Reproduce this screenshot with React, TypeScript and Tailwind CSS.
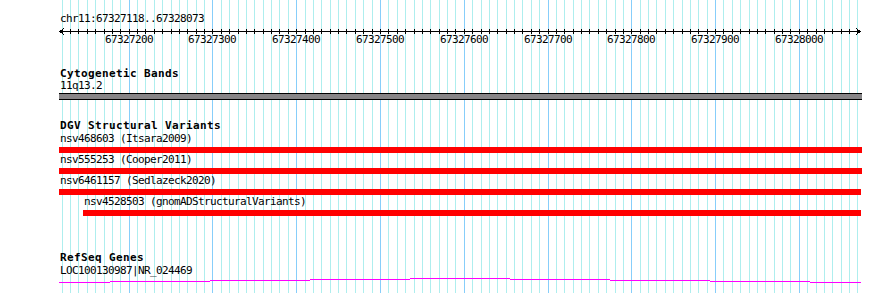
const START = 67327118;
const END = 67328073;
const LEFT = 60;
const SPAN = 800;

const bpToX = (bp: number) =>
  Math.round(LEFT + ((bp - START) * SPAN) / (END - START));

const gridBps: number[] = [];
for (let bp = 67327120; bp <= 67328070; bp += 10) gridBps.push(bp);

const majorBps = gridBps.filter((bp) => bp % 100 === 0);

interface Variant {
  name: string;
  study: string;
  from: number;
  to: number;
}

const variants: Variant[] = [
  { name: "nsv468603", study: "Itsara2009", from: 59, to: 862 },
  { name: "nsv555253", study: "Cooper2011", from: 59, to: 862 },
  { name: "nsv6461157", study: "Sedlazeck2020", from: 59, to: 861 },
  { name: "nsv4528503", study: "gnomADStructuralVariants", from: 83, to: 861 },
];

// intron-ish connector under the gene label: [x1, x2, row]
const geneSegments: [number, number, number][] = [
  [59, 110, 5],
  [110, 210, 4],
  [210, 310, 3],
  [310, 410, 2],
  [410, 510, 1],
  [510, 610, 2],
  [610, 710, 3],
  [710, 810, 4],
  [810, 861, 5],
];

function Grid() {
  return (
    <svg
      className="absolute inset-0"
      width={890}
      height={293}
      shapeRendering="crispEdges"
    >
      {gridBps.map((bp) => (
        <rect
          key={bp}
          x={bpToX(bp)}
          y={0}
          width={1}
          height={293}
          fill={bp % 100 === 0 ? "#87cefa" : "#aeeeee"}
        />
      ))}
    </svg>
  );
}

function Ruler() {
  return (
    <div className="relative h-[46px]">
      <div className="pl-[60px] pt-[13px] text-[11px] leading-[12px] tracking-[-0.62px]">
        chr11:67327118..67328073
      </div>
      <svg className="block" width={890} height={10} shapeRendering="crispEdges">
        <rect x={60} y={6} width={800} height={1} fill="#000" />
        {gridBps.map((bp) => (
          <rect key={bp} x={bpToX(bp)} y={4} width={1} height={5} fill="#000" />
        ))}
        <polyline points="64,3 60,6.5 64,10" fill="none" stroke="#000" strokeWidth={1} />
        <polyline points="856,3 860,6.5 856,10" fill="none" stroke="#000" strokeWidth={1} />
      </svg>
      <div className="relative -mt-[1px] h-[12px] text-[11px] leading-[12px] tracking-[-0.62px]">
        {majorBps.map((bp) => (
          <span
            key={bp}
            className="absolute top-0 w-[60px] text-center"
            style={{ left: bpToX(bp) - 30 }}
          >
            {bp}
          </span>
        ))}
      </div>
    </div>
  );
}

function TrackTitle({ children }: { children: string }) {
  return (
    <div className="pl-[60px] text-[11px] font-bold leading-[12px] tracking-[0.38px]">
      {children}
    </div>
  );
}

export default function App() {
  return (
    <div className="relative h-[293px] w-[890px] overflow-hidden bg-white font-['DejaVu_Sans_Mono',monospace] text-black">
      <Grid />
      <div className="relative">
        <Ruler />

        <section className="mt-[22px]">
          <TrackTitle>Cytogenetic Bands</TrackTitle>
          <div className="pl-[60px] text-[11px] leading-[12px] tracking-[-0.62px]">11q13.2</div>
          <div className="ml-[59px] mt-[1px] h-[7px] w-[803px] border-y border-black bg-[#878587]" />
        </section>

        <section className="mt-[20px]">
          <TrackTitle>DGV Structural Variants</TrackTitle>
          {variants.map((v) => (
            <div key={v.name}>
              <div
                className="text-[11px] leading-[13px] tracking-[-0.62px]"
                style={{ paddingLeft: v.from + 1 }}
              >
                {v.name} ({v.study})
              </div>
              <div
                className="mt-[2px] h-[6px] bg-[#ff0000]"
                style={{ marginLeft: v.from, width: v.to - v.from }}
              />
            </div>
          ))}
        </section>

        <section className="mt-[36px]">
          <TrackTitle>RefSeq Genes</TrackTitle>
          <div className="pl-[60px] text-[11px] leading-[13px] tracking-[-0.62px]">
            LOC100130987|NR_024469
          </div>
          <svg className="block" width={890} height={8} shapeRendering="crispEdges">
            {geneSegments.map(([x1, x2, row]) => (
              <rect
                key={x1}
                x={x1}
                y={row}
                width={x2 - x1}
                height={1}
                fill="#ff00ff"
              />
            ))}
          </svg>
        </section>
      </div>
    </div>
  );
}
